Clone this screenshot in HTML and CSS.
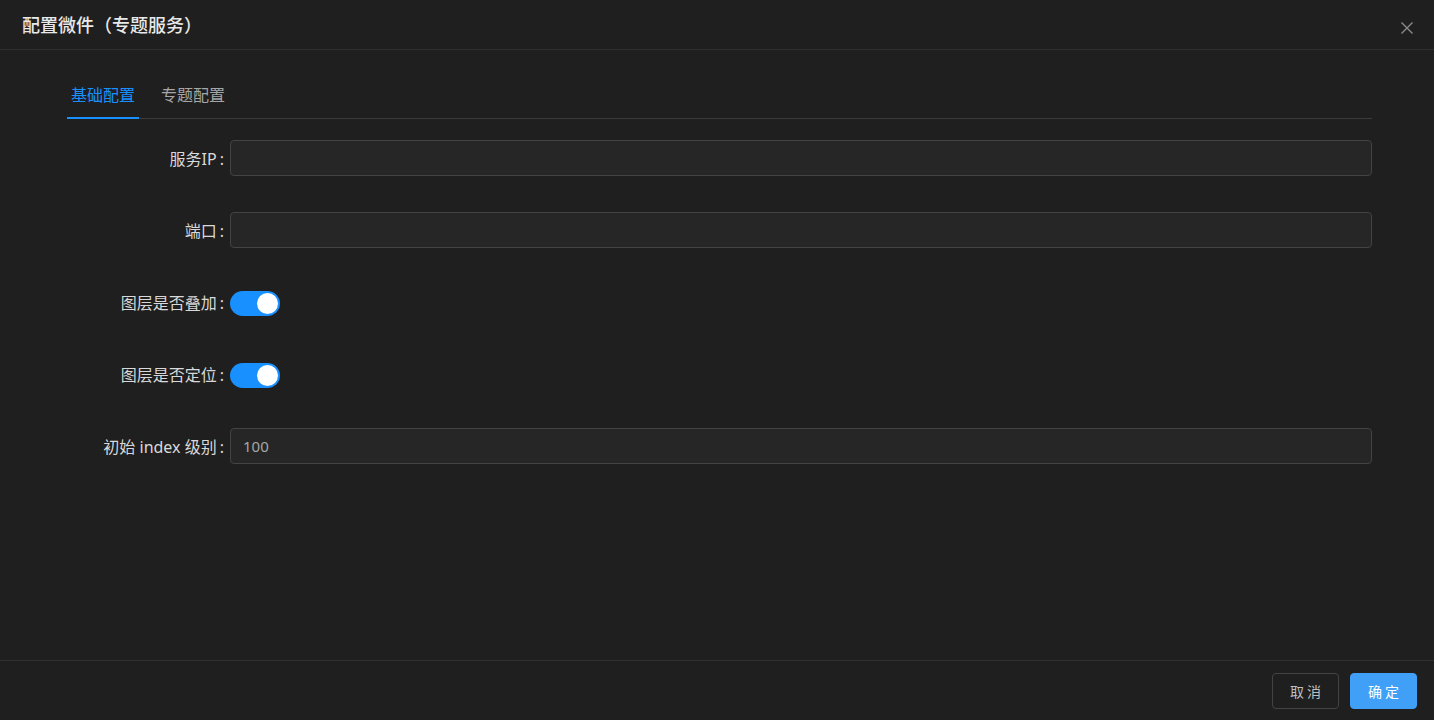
FILE: index.html
```html
<!DOCTYPE html>
<html lang="zh-CN">
<head>
<meta charset="utf-8">
<title>配置微件（专题服务）</title>
<link rel="stylesheet" href="styles.css">
</head>
<body>
<div class="modal">
  <header class="modal-header">
    <div class="modal-title">配置微件（专题服务）</div>
    <button class="modal-close" aria-label="关闭">
      <svg width="14" height="14" viewBox="0 0 14 14"><path d="M1.5 1.5 L12.5 12.5 M12.5 1.5 L1.5 12.5" stroke="#8a8a8a" stroke-width="1.4" fill="none"/></svg>
    </button>
  </header>
  <main class="modal-body">
    <nav class="tabs">
      <div class="tab tab-active">基础配置</div>
      <div class="tab">专题配置</div>
    </nav>
    <form class="form">
      <div class="form-row">
        <label class="form-label">服务IP</label>
        <div class="form-control"><input class="input" type="text"></div>
      </div>
      <div class="form-row">
        <label class="form-label">端口</label>
        <div class="form-control"><input class="input" type="text"></div>
      </div>
      <div class="form-row">
        <label class="form-label">图层是否叠加</label>
        <div class="form-control"><span class="switch"><span class="switch-knob"></span></span></div>
      </div>
      <div class="form-row">
        <label class="form-label">图层是否定位</label>
        <div class="form-control"><span class="switch"><span class="switch-knob"></span></span></div>
      </div>
      <div class="form-row">
        <label class="form-label">初始 index 级别</label>
        <div class="form-control"><input class="input" type="text" value="100"></div>
      </div>
    </form>
  </main>
  <footer class="modal-footer">
    <button class="btn btn-default">取 消</button>
    <button class="btn btn-primary">确 定</button>
  </footer>
</div>
</body>
</html>
```

FILE: styles.css
```css
* { box-sizing: border-box; }
html, body { margin: 0; padding: 0; }
body {
  background: #1f1f1f;
  font-family: "Noto Sans", "Noto Sans CJK SC", sans-serif;
  color: rgba(255,255,255,0.85);
}
.modal {
  width: 1434px;
  height: 720px;
  display: flex;
  flex-direction: column;
  background: #1f1f1f;
}
.modal-header {
  height: 50px;
  border-bottom: 1px solid #303030;
  display: flex;
  align-items: center;
  justify-content: space-between;
  padding: 0 20px 0 22px;
}
.modal-title {
  font-size: 18px;
  line-height: 24px;
  color: #e8e8e8;
  font-weight: 500;
}
.modal-close {
  background: none;
  border: 0;
  padding: 0;
  width: 14px;
  height: 14px;
  margin-top: 6px;
  display: flex;
}
.modal-body {
  flex: 1;
  padding: 21px 62px 0 67px;
}
.tabs {
  display: flex;
  gap: 18px;
  border-bottom: 1px solid #3a3a3a;
}
.tab {
  font-size: 16px;
  line-height: 24px;
  padding: 12px 4px 10px;
  color: #a6a6a6;
  border-bottom: 2px solid transparent;
  margin-bottom: -1px;
}
.tab-active {
  color: #1890ff;
  border-bottom-color: #1890ff;
}
.form {
  margin-top: 21px;
  display: flex;
  flex-direction: column;
  gap: 36px;
}
.form-row {
  display: grid;
  grid-template-columns: 163px 1fr;
  height: 36px;
  align-items: center;
}
.form-label {
  text-align: right;
  font-size: 16px;
  color: #d9d9d9;
  padding-right: 6px;
  white-space: nowrap;
  margin-top: -1px;
}
.form-label::after {
  content: ":";
  margin-left: 3px;
}
.form-control { display: flex; align-items: center; }
.input {
  width: 100%;
  height: 36px;
  background: #262626;
  border: 1px solid #434343;
  border-radius: 4px;
  padding: 4px 12px;
  font-family: "Noto Sans", sans-serif;
  font-size: 15px;
  color: #a6a6a6;
  outline: none;
}
.switch {
  width: 50px;
  height: 25px;
  border-radius: 13px;
  background: #1890ff;
  display: flex;
  align-items: center;
  justify-content: flex-end;
  padding: 0 2px;
  margin-top: 2px;
}
.switch-knob {
  width: 21px;
  height: 21px;
  border-radius: 50%;
  background: #fff;
}
.modal-footer {
  height: 60px;
  border-top: 1px solid #303030;
  display: flex;
  justify-content: flex-end;
  align-items: center;
  gap: 11px;
  padding: 0 17px 0 0;
}
.btn {
  height: 36px;
  width: 67px;
  border-radius: 4px;
  font-family: "Noto Sans CJK SC", sans-serif;
  font-size: 14px;
  padding: 0;
  margin-top: 1px;
}
.btn-default {
  background: transparent;
  border: 1px solid #434343;
  color: #bfbfbf;
}
.btn-primary {
  background: #40a0f7;
  border: 1px solid #40a0f7;
  color: #fff;
}
```
